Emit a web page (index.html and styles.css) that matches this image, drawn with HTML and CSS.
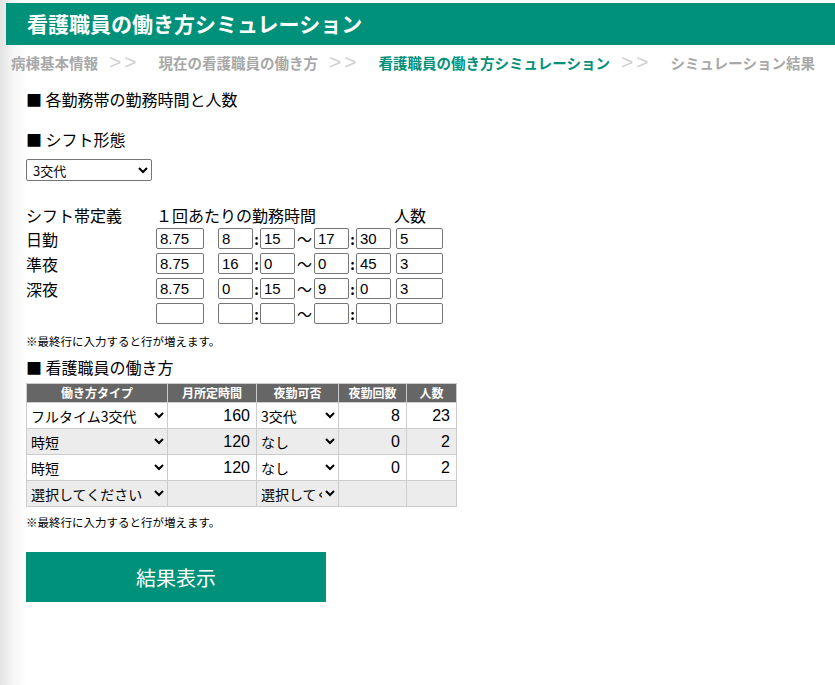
FILE: index.html
```html
<!DOCTYPE html>
<html lang="ja">
<head>
  <meta charset="UTF-8">
  <title>看護職員の働き方シミュレーション</title>
  <link rel="stylesheet" href="styles.css">
</head>
<body>

  <div class="header">看護職員の働き方シミュレーション</div>

  <div class="steps">
    <span class="step">病棟基本情報</span>
    <span class="sep">&gt;&gt;</span>
    <span class="step">現在の看護職員の働き方</span>
    <span class="sep">&gt;&gt;</span>
    <span class="step active">看護職員の働き方シミュレーション</span>
    <span class="sep">&gt;&gt;</span>
    <span class="step">シミュレーション結果</span>
  </div>

  <div class="main">
    <div class="heading first">■ 各勤務帯の勤務時間と人数</div>

    <div class="heading">■ シフト形態</div>
    <select class="shift-type">
      <option>3交代</option>
      <option>2交代</option>
    </select>

    <div class="shift-table" id="shiftTable">
      <div class="shift-head">
        <span class="col-label">シフト帯定義</span>
        <span class="col-time">１回あたりの勤務時間</span>
        <span class="col-num">人数</span>
      </div>
    </div>
    <div class="note">※最終行に入力すると行が増えます。</div>

    <div class="heading tight">■ 看護職員の働き方</div>
    <table class="work-table">
      <thead>
        <tr>
          <th class="w-type">働き方タイプ</th>
          <th class="w-hours">月所定時間</th>
          <th class="w-night">夜勤可否</th>
          <th class="w-count">夜勤回数</th>
          <th class="w-people">人数</th>
        </tr>
      </thead>
      <tbody id="workRows"></tbody>
    </table>
    <div class="note">※最終行に入力すると行が増えます。</div>

    <button class="btn">結果表示</button>
  </div>

  <script>
    const shifts = [
      { name: "日勤", hours: "8.75", sh: "8", sm: "15", eh: "17", em: "30", num: "5" },
      { name: "準夜", hours: "8.75", sh: "16", sm: "0", eh: "0", em: "45", num: "3" },
      { name: "深夜", hours: "8.75", sh: "0", sm: "15", eh: "9", em: "0", num: "3" },
      { name: "", hours: "", sh: "", sm: "", eh: "", em: "", num: "" }
    ];

    const shiftTable = document.getElementById("shiftTable");
    shifts.forEach(s => {
      const row = document.createElement("div");
      row.className = "shift-row";
      row.innerHTML =
        `<span class="col-label">${s.name}</span>` +
        `<input class="in-hours" type="text" value="${s.hours}">` +
        `<input class="in-hh" type="text" value="${s.sh}">` +
        `<span class="colon">:</span>` +
        `<input class="in-mm" type="text" value="${s.sm}">` +
        `<span class="tilde">〜</span>` +
        `<input class="in-hh2" type="text" value="${s.eh}">` +
        `<span class="colon">:</span>` +
        `<input class="in-mm" type="text" value="${s.em}">` +
        `<input class="in-num" type="text" value="${s.num}">`;
      shiftTable.appendChild(row);
    });

    const types = ["選択してください", "フルタイム3交代", "フルタイム2交代", "時短"];
    const nights = ["選択してください", "3交代", "2交代", "なし"];
    const works = [
      { type: "フルタイム3交代", hours: "160", night: "3交代", count: "8", people: "23" },
      { type: "時短", hours: "120", night: "なし", count: "0", people: "2" },
      { type: "時短", hours: "120", night: "なし", count: "0", people: "2" },
      { type: "選択してください", hours: "", night: "選択してください", count: "", people: "" }
    ];

    function options(list, selected) {
      return list.map(o => `<option${o === selected ? " selected" : ""}>${o}</option>`).join("");
    }

    const body = document.getElementById("workRows");
    works.forEach(w => {
      const tr = document.createElement("tr");
      tr.innerHTML =
        `<td><select>${options(types, w.type)}</select></td>` +
        `<td class="num">${w.hours}</td>` +
        `<td><select>${options(nights, w.night)}</select></td>` +
        `<td class="num">${w.count}</td>` +
        `<td class="num">${w.people}</td>`;
      body.appendChild(tr);
    });
  </script>

</body>
</html>
```

FILE: styles.css
```css
body {
  margin: 0;
  padding: 3px 0 0 6px;
  font-family: "Noto Sans CJK JP", "Noto Sans", sans-serif;
  color: #000;
  background: linear-gradient(to right, #e4e4e4 0, #f6f6f6 14px, #fff 26px);
  min-height: 682px;
}

.header {
  background: #00917a;
  color: #fff;
  font-size: 21px;
  font-weight: bold;
  height: 42px;
  line-height: 40px;
  padding-left: 21px;
}

.steps {
  display: flex;
  align-items: center;
  height: 34px;
  padding-left: 5px;
  font-size: 14.5px;
  font-weight: bold;
  white-space: nowrap;
}

.step {
  color: #a8a8a8;
}

.step.active {
  color: #00917a;
}

.sep {
  color: #cfcfcf;
  font-weight: normal;
  font-family: "Liberation Sans", sans-serif;
  font-size: 21px;
  letter-spacing: 3px;
  margin: 0 19px 0 11px;
}

.main {
  padding-left: 20px;
}

.heading {
  font-size: 16px;
  height: 24px;
  line-height: 24px;
  margin-top: 16px;
}

.heading.first {
  margin-top: 8px;
}

.heading.tight {
  margin-top: 6px;
}

.shift-type {
  display: block;
  width: 126px;
  height: 22px;
  margin-top: 8px;
  font-size: 13px;
  font-family: "Noto Sans CJK JP", sans-serif;
  padding: 0 0 0 2px;
  border: 1px solid #767676;
  border-radius: 2px;
  background: #fff;
}

.shift-table {
  margin-top: 23px;
}

.shift-head,
.shift-row {
  display: flex;
  align-items: center;
}

.shift-head {
  font-size: 16px;
  height: 22px;
}

.shift-row {
  height: 25px;
  font-size: 16px;
}

.col-label {
  width: 130px;
}

.col-time {
  width: 238px;
}

.shift-row input {
  box-sizing: border-box;
  height: 21px;
  border: 1px solid #767676;
  border-radius: 2px;
  font-size: 15px;
  font-family: "Liberation Sans", sans-serif;
  padding: 0 3px;
  margin: 0;
}

.in-hours {
  width: 48px;
  margin-right: 14px !important;
}

.in-hh,
.in-hh2 {
  width: 35px;
}

.in-mm {
  width: 35px;
}

.in-num {
  width: 47px;
  margin-left: 5px !important;
}

.colon {
  width: 7px;
  text-align: center;
  font-weight: bold;
  font-size: 14px;
}

.tilde {
  width: 19px;
  text-align: center;
  font-size: 15px;
}

.note {
  font-size: 11.5px;
  margin-top: 7px;
  height: 16px;
  line-height: 16px;
}

.work-table {
  border-collapse: collapse;
  margin-top: 4px;
  font-size: 15px;
}

.work-table th {
  background: #666;
  color: #fff;
  font-size: 12px;
  font-weight: bold;
  height: 18px;
  padding: 0;
  border: 1px solid #ccc;
  line-height: 18px;
}

.work-table td {
  border: 1px solid #ccc;
  height: 25px;
  padding: 0;
}

.work-table tbody tr:nth-child(even) td {
  background: #ececec;
}

.work-table td.num {
  text-align: right;
  padding-right: 6px;
  font-family: "Liberation Sans", sans-serif;
  font-size: 16px;
}

.w-type { width: 140px; }
.w-hours { width: 88px; }
.w-night { width: 81px; }
.w-count { width: 67px; }
.w-people { width: 49px; }

.work-table select {
  width: 100%;
  height: 25px;
  border: none;
  background: transparent;
  font-size: 14px;
  font-family: "Noto Sans CJK JP", sans-serif;
  padding: 0;
  outline: none;
}

.btn {
  display: block;
  margin-top: 22px;
  width: 300px;
  height: 50px;
  background: #00917a;
  color: #fff;
  border: none;
  font-size: 20px;
  font-family: "Noto Sans CJK JP", sans-serif;
  cursor: pointer;
}
```
